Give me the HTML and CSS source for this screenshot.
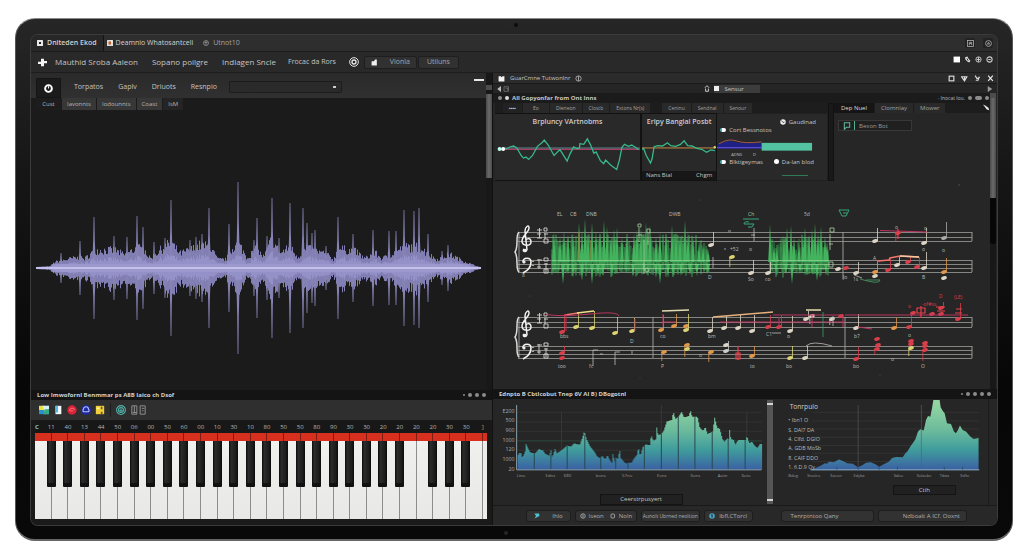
FILE: index.html
```html
<!DOCTYPE html>
<html lang="en">
<head>
<meta charset="utf-8">
<title>Score and waveform editor</title>
<link rel="stylesheet" href="styles.css">
</head>
<body>
<div class="device">
<main class="screen">
  <header class="tabbar">
    <button class="doc-tab on"><svg class="ic" viewBox="0 0 12 12"><rect width="12" height="12" rx="1" fill="#e8e8e8"/><rect x="4" y="4" width="4" height="4" fill="#222"/></svg>Dniteden Ekod</button>
    <button class="doc-tab second"><svg class="ic" viewBox="0 0 12 12"><rect width="12" height="12" rx="1" fill="#ddd"/><rect x="3" y="3" width="5" height="6" fill="#c4622d"/><path d="M7 1h4v4z" fill="#fff"/></svg>Deamnio Whatosantceli</button>
    <button class="doc-tab dim"><svg class="ic" viewBox="0 0 12 12" fill="none" stroke="#999" stroke-width="1.5"><circle cx="6" cy="6" r="5"/><path d="M3 5h6M4 8h4M6 2v4"/></svg>Utnot10</button>
    <span class="grow"></span>
    <button class="sq" aria-label="Layout"><svg class="ic" viewBox="0 0 12 12" fill="none" stroke="#aaa" stroke-width="1.4"><rect x="1" y="1" width="10" height="10"/><path d="M4 9V4h4v5M4 6h4"/></svg></button>
    <button class="sq" aria-label="Account"><svg class="ic" viewBox="0 0 12 12" fill="none" stroke="#aaa" stroke-width="1.5"><circle cx="6" cy="6" r="5"/><path d="M4 7l2-3 2 3z"/></svg></button>
  </header>

  <nav class="menubar">
    <svg class="ic logo" viewBox="0 0 12 12"><path d="M4 1h4v3h4v3H8v4H4V8H0V5h4z" fill="#f4f4f4"/></svg>
    <a href="#" class="wide">Mauthid Sroba Aaleon</a><a href="#" class="wide">Sopano poilgre</a><a href="#" class="wide">Indlagen Sncle</a><a href="#">Frocac da Rors</a>
    <svg class="ic ring" viewBox="0 0 12 12" fill="none" stroke="#e6e6e6" stroke-width="1.2"><circle cx="6" cy="6" r="5.2"/><circle cx="6" cy="6" r="2.4" stroke-width="1.6"/></svg>
    <span class="group">
      <button class="gbtn first"><svg class="ic" viewBox="0 0 12 12"><path d="M1 4h4l2-3h3v10H1z" fill="#eee"/></svg><span>Vionla</span></button>
      <button class="gbtn">Utiluns</button>
    </span>
    <span class="grow"></span>
    <span class="winicons">
      <svg class="ic" viewBox="0 0 12 12"><rect x="1" y="1" width="11" height="10" fill="#fff"/></svg>
      <svg class="ic" viewBox="0 0 12 12" fill="#ddd"><path d="M2 2l4-1 2 4 3 3-2 3-4-2-3-4z"/><path d="M5 4l2 4" stroke="#292929" stroke-width="1.6"/></svg>
      <svg class="ic" viewBox="0 0 12 12" fill="none" stroke="#ccc" stroke-width="1.6"><circle cx="6" cy="6" r="4.5"/><path d="M6 2v8M3 6h6"/></svg>
      <svg class="ic" viewBox="0 0 12 12" fill="none" stroke="#ccc" stroke-width="1.8"><circle cx="6" cy="6" r="4.5"/><path d="M4 6h4"/></svg>
    </span>
  </nav>

  <div class="main">
    <section class="left">
      <div class="wavebox">
        <div class="wavecol">
          <div class="toolbar">
            <button class="tool-on" aria-label="Record"><svg viewBox="0 0 12 12" fill="none" stroke="#fff" stroke-width="2.6"><circle cx="6" cy="6" r="4.5"/><path d="M6 3v3" stroke-width="1.4"/></svg></button>
            <a href="#">Torpatos</a><a href="#">Gaplv</a><a href="#">Driuots</a><a href="#">Resnpio</a>
            <select class="drop" aria-label="Preset"><option></option></select>
            <span class="grow"></span>
            <button class="mini" aria-label="Minimise"></button>
          </div>
          <div class="subtabs"><button class="plain">Cust</button><button>Iavonnts</button><button>Iodounnts</button><button>Coast</button><button class="dk">IsM</button></div>
          <svg id="wave" class="fluid" viewBox="31 111 455 279" role="img" aria-label="Waveform"></svg>
        </div>
        <div class="scroll lscroll"><i class="cap"></i><i class="thumb"></i></div>
      </div>
      <div class="strip"><b>Low Imwofornl Benmmar ps A8B Iaico ch Dsof</b><span class="grow"></span><i class="dot s"></i><i class="dot"></i><i class="dot"></i><i class="dot"></i></div>
      <div class="pbar">
        <button aria-label="Image"><svg viewBox="0 0 12 12"><rect y="1" width="12" height="10" fill="#2a8fd0"/><path d="M0 1h6v5H0z" fill="#e9e03e"/><path d="M4 1h8v4L7 8z" fill="#d6f0f4"/><path d="M7 5h5v6H5z" fill="#38a884"/></svg></button>
        <button aria-label="Page"><svg viewBox="0 0 12 12"><rect x="3" y="1" width="7" height="10" fill="#f2f7fa"/><path d="M3 1h3v8H3z" fill="#57b6e0"/></svg></button>
        <button aria-label="Record"><svg viewBox="0 0 12 12"><circle cx="6" cy="6" r="5.6" fill="#dc2138"/><path d="M3 7c0-4 6-4 6-1M4 7h3" stroke="#ff8b93" fill="none"/></svg></button>
        <button aria-label="Cloud"><svg viewBox="0 0 12 12"><circle cx="6" cy="6" r="6" fill="#1e2aa0"/><path d="M3 8a2 2 0 010-3 3 3 0 016 0 2 2 0 010 3z" fill="none" stroke="#b8c4ff" stroke-width="1.3"/></svg></button>
        <button aria-label="File"><svg viewBox="0 0 12 12"><path d="M1 1h10v10H1z" fill="#f1cf3a"/><path d="M7 2h2v3H7zM7 8h2v3H7z" fill="#6e5a10"/><path d="M2 3h3v2H2z" fill="#fff6b8"/></svg></button>
        <span class="rule"></span>
        <button aria-label="Sync"><svg viewBox="0 0 12 12" fill="none" stroke="#4fb3ab" stroke-width="1.3"><circle cx="6" cy="6" r="5.3"/><circle cx="6" cy="6" r="3"/><path d="M4 7h4M6 4v4"/></svg></button>
        <button class="pair" aria-label="Pages"><svg viewBox="0 0 18 12" fill="none" stroke="#8d8d8d" stroke-width="1.2"><path d="M1 1h6v10H1zM11 1h6v10h-6zM4 1v8M13 4h3M13 7h2M2 9h5"/></svg></button>
      </div>
      <div class="piano">
        <div class="nums" id="nums"></div>
        <div class="redband" id="red"></div>
        <div class="keys" id="keys"></div>
      </div>
    </section>

    <section class="right">
      <div class="rtitle">
        <svg class="ic" viewBox="0 0 12 12"><path d="M1 2h4l1 2 2-2h3v9H1z" fill="#f4f4f4"/></svg><span>GuarCmne Tutwonlnr</span><svg class="ic" viewBox="0 0 12 12" fill="none" stroke="#bbb" stroke-width="1.4"><circle cx="6" cy="6" r="4.5"/><path d="M6 2v8"/></svg>
        <span class="grow"></span>
        <svg class="ic" viewBox="0 0 12 12" fill="none" stroke="#ddd" stroke-width="2"><rect x="2" y="2" width="8" height="8"/></svg>
        <svg class="ic" viewBox="0 0 12 12" fill="none" stroke="#ddd" stroke-width="2"><path d="M1 3h9L6 10zM6 3v5"/></svg>
        <svg class="ic" viewBox="0 0 12 12" fill="none" stroke="#ddd" stroke-width="2"><path d="M2 1l3 5 5-2M9 3l-2 6H3"/></svg>
        <svg class="ic" viewBox="0 0 12 12" fill="none" stroke="#eee" stroke-width="2"><path d="M2 1l8 9M10 1L2 10"/></svg>
      </div>
      <div class="address">
        <svg viewBox="0 0 18 8"><path d="M5 0v8L0 4z" fill="#bbb"/><path d="M9 1h6v6H9zM11 3h3v3" fill="none" stroke="#777"/></svg>
        <svg class="home" viewBox="0 0 8 10" fill="none" stroke="#ccc" stroke-width="1.4"><path d="M1 4l3-3 3 3M2 5v4h4V5"/></svg>
        <button class="crumb"><i></i>Sensur</button>
        <span class="grow"></span>
        <svg viewBox="0 0 8 8" class="next"><path d="M1 0v8l6-4z" fill="#999"/></svg>
      </div>

      <div class="upper">
        <div class="ucol">
          <div class="ttl"><i class="dot"></i><i class="dot w"></i><b>All Gopyonfar from Ont Inns</b><span class="grow"></span><span class="tinytxt">· Inocat lou.</span><i class="dot"></i><i class="dot pill"></i><i class="dot"></i></div>
          <div class="panels">
            <div class="pl">
              <div class="tabs"><button class="tb dots">▪▪▪▪</button><button class="tb t1">Eo</button><button class="tb">Dieneon</button><button class="tb">Clostb</button><button class="tb">Extons Nr(s)</button><span class="sp"></span><button class="tb">Ceninu</button><button class="tb">Sendnal</button><button class="tb">Senour</button></div>
              <div class="cards">
                <article class="card c1"><h2>Brpluncy VArtnobms</h2>
                  <svg class="fluid" viewBox="15 135 444 145"><path d="M36 191H459" stroke="#a63f62" stroke-width="4"/><path d="M36 187H459" stroke="#53848d" stroke-width="3"/><polyline fill="none" stroke="#37b98a" stroke-width="4" points="40,190 50,190 60,184 72,181 82,187 95,210 102,218 110,215 118,222 130,210 145,182 158,172 166,163 178,178 196,210 214,192 236,227 245,205 256,184 266,189 274,187 275,174 287,176 298,159 308,178 318,203 325,199 338,226 348,235 354,224 370,240 388,253 396,225 404,185 412,176 424,182 434,178 444,184 455,192"/><circle cx="29" cy="190" r="6" fill="#bfe"/><circle cx="40" cy="190" r="6" fill="#fff"/></svg>
                </article>
                <article class="card c2"><h2>Eripy Bangial Posbt</h2>
                  <svg class="fluid" viewBox="457 135 228 120"><path d="M457 187H680" stroke="#c98b45" stroke-width="3"/><polyline fill="none" stroke="#37b98a" stroke-width="4" points="457,192 462,188 470,210 483,233 488,220 494,183 505,180 520,181 535,171 545,180 560,182 575,176 586,165 597,180 610,181 625,188 640,191 655,200 668,193 680,195"/><circle cx="680" cy="185" r="4" fill="#dcd66b"/></svg>
                  <div class="cfoot"><span>Nans Bial</span><span>Chgm</span></div>
                </article>
                <article class="card c3">
                  <div class="row end"><svg class="ic" viewBox="0 0 12 12"><circle cx="6" cy="6" r="5.5" fill="#eee"/><path d="M3 3l3 4 3-1" stroke="#333" stroke-width="1.6" fill="none"/></svg>Gaudinad</div>
                  <label class="row"><input type="checkbox" class="tog" checked>Cort Bessnotos</label>
                  <svg class="fluid" viewBox="0 0 110 13"><path d="M0 6q10-5 18-3t28 1v6H0z" fill="#1f2186"/><path d="M2 5q10-6 18-3t26 1" fill="none" stroke="#a8594e"/><path d="M0 9h46" stroke="#6d5ce0"/><rect x="46" y="4" width="52" height="8" fill="#52c2a0"/></svg>
                  <div class="micro"><span>ADNS</span><span>D</span></div>
                  <div class="row two"><label><input type="checkbox" class="tog" checked>Blktigeymas</label><label><input type="radio" class="rad" checked>Da-lan blod</label></div>
                  <i class="gline"></i>
                </article>
              </div>
            </div>
            <div class="splitter"></div>
            <aside class="pr">
              <div class="tabs"><button class="tb sel">Dep Nuel</button><button class="tb big">Clomnlay</button><button class="tb big">Mower</button><svg class="pen" viewBox="0 0 10 10"><path d="M1 2l3 1 4 3 1 3-3-1-3-4z" fill="#eee"/></svg></div>
              <button class="sbtn"><svg viewBox="0 0 12 12" fill="none" stroke="#5fb49a" stroke-width="1.6"><path d="M2 11V1h8v7H5z"/></svg><i></i>Bexon Bot</button>
            </aside>
          </div>
          <svg id="score" class="fluid" viewBox="493 181 497 208" role="img" aria-label="Score"></svg>
        </div>
        <div class="scroll rscroll"><i class="cap"></i><i class="thumb"></i><i class="black"></i></div>
      </div>

      <div class="strip"><b>Ednpto B Cbtlcobut Tnep 6V Al B) DBogotnl</b><span class="grow"></span><i class="dot s"></i><i class="dot"></i><i class="dot"></i><i class="dot"></i><i class="dot"></i></div>
      <div class="charts">
        <div class="ch1">
          <svg class="fluid" id="chart1" viewBox="9 60 822 240" role="img" aria-label="Spectrum"></svg>
          <button class="out o1">Ceerstrpusyert</button>
        </div>
        <div class="scroll cscroll"><i></i><i></i></div>
        <div class="ch2">
          <svg class="fluid" id="chart2" viewBox="51 60 636 240" role="img" aria-label="Tempo"></svg>
          <button class="out o2">Ctih</button>
        </div>
      </div>
      <footer class="bottom">
        <button class="b1"><svg class="ic" viewBox="0 0 12 12"><path d="M1 1h9l1 5-4 2-6 3 3-5z" fill="#4cc3cf"/></svg><span>Ihlo</span></button>
        <button class="b2"><svg class="ic" viewBox="0 0 12 12" fill="none" stroke="#aaa" stroke-width="1.8"><circle cx="6" cy="6" r="4.5"/><path d="M6 3v6"/></svg>Iseon<svg class="ic gap" viewBox="0 0 12 12" fill="none" stroke="#aaa" stroke-width="1.8"><rect x="2" y="2" width="7" height="8" rx="2"/></svg>Noln</button>
        <button class="b3">Aunolt Ubrned neoltion</button>
        <button class="b4"><svg class="ic" viewBox="0 0 12 12"><circle cx="6" cy="6" r="5.6" fill="#4aa5bd"/><path d="M6 2v8M4 4l4 3" stroke="#123" stroke-width="1.3"/></svg>Ibfl,CTorcl</button>
        <button class="b5">Tenrptntoo Qany</button>
        <button class="b6">Ndboalt A ICf. Ooxnt</button>
      </footer>
    </section>
  </div>
</main>
</div>
<script src="app.js"></script>
</body>
</html>
```
FILE: styles.css
```css
*, *::before, *::after { box-sizing: border-box; }
body { margin: 0; padding: 18px 11px 18px 15px; background: #fff; font-family: "Open Sans", "Noto Sans", sans-serif; font-size: 7px; line-height: 8px; color: #c4c4c4; }
button { font: inherit; color: inherit; background: none; border: 0; padding: 0; margin: 0; white-space: nowrap; display: flex; align-items: center; }
a { color: inherit; text-decoration: none; white-space: nowrap; }
h2 { margin: 0; }
svg { display: block; flex: none; }
i { display: block; }
.fluid { width: 100%; height: auto; }
.ic { width: 7px; height: 7px; }
.grow { flex: 1; }
.device { position: relative; padding: 16px 15px 14px; border: 1px solid #555; border-top-color: #8a8a8a; border-bottom: 2px solid #666; border-radius: 20px; background: linear-gradient(#262626, #161616 30%, #070707 70%, #090909); }
.device::before, .device::after { content: ""; position: absolute; left: 50%; top: 4px; width: 4px; height: 4px; border-radius: 50%; background: #0c0c0c; }
.device::after { left: 49%; top: auto; bottom: 4px; background: #262626; }
.screen { border-radius: 7px; overflow: hidden; background: #222; box-shadow: 0 0 0 1px #3b3b3b; }

.tabbar { display: flex; align-items: center; height: 17px; background: #2e2e2e; border-bottom: 1px solid #1b1b1b; padding-right: 4px; }
.doc-tab { height: 16px; gap: 4px; padding: 0 6px; color: #d2d2d2; }
.doc-tab.on { background: #272727; border-right: 1px solid #141414; padding-right: 6px; font-weight: 600; }
.doc-tab.second { padding-left: 3px; gap: 3px; }
.doc-tab.dim { color: #a4a4a4; padding-left: 4px; }
.doc-tab .ic { width: 6px; height: 6px; }
.sq { width: 10px; height: 10px; margin-left: 8px; justify-content: center; background: #222; border-radius: 2px; }

.menubar { display: flex; align-items: center; height: 21px; background: #292929; border-bottom: 1px solid #1d1d1d; font-size: 8px; padding: 0 4px 0 7px; }
.menubar a { margin-right: 12px; font-size: 7px; }
.menubar a.wide { margin-right: 14px; font-size: 8px; }
.menubar a:nth-of-type(4) { margin-left: -2px; margin-right: 13px; }
.menubar .logo { width: 9px; height: 9px; margin-right: 8px; }
.menubar .ring { width: 10px; height: 10px; margin-right: 5px; }
.group { display: flex; gap: 1px; }
.gbtn { height: 13px; width: 41px; justify-content: center; background: #313131; border: 1px solid #1e1e1e; border-radius: 2px; font-size: 7px; color: #a5a5a5; }
.gbtn.first { width: 53px; gap: 12px; }
.winicons { display: flex; gap: 4px; align-self: flex-start; padding-top: 4px; }

.main { display: grid; grid-template-columns: 462fr 504fr; }
.left, .right, .wavecol, .ucol { min-width: 0; }
.left { border-right: 1px solid #121212; }
.wavebox { display: flex; background: #1b1b1b; }
.wavecol { flex: 1; }
.toolbar { display: flex; align-items: center; height: 25px; background: linear-gradient(#2a2a2a, #303030); padding: 2px 2px 0 0; }
.toolbar a { margin-right: 15px; font-size: 7px; }
.tool-on { width: 25px; height: 20px; margin: 3px 13px 0 5px; background: #1b1b1b; border: 1px solid #151515; justify-content: center; }
.tool-on svg { width: 9px; height: 9px; }
.drop { appearance: none; width: 113px; height: 12px; margin-left: -3px; background: #2a2a2a linear-gradient(#ccc, #ccc) no-repeat right 5px center / 3px 2px; border: 1px solid #1c1c1c; border-radius: 2px; padding: 0; }
.mini { width: 10px; height: 2px; background: #e8e8e8; margin-bottom: 13px; }
.subtabs { display: flex; height: 13px; padding: 0 0 1px 5px; gap: 1px; font-size: 6px; }
.subtabs button { padding: 0 5px; background: #373737; color: #b5b5b5; }
.subtabs .plain { background: #1d1d1d; width: 25px; justify-content: center; padding: 0; }
.subtabs .dk { background: #242424; }
.scroll { width: 6px; margin-right: 1px; background: #181818; }
.cap { height: 5px; background: #4c4c4c; }
.thumb { background: linear-gradient(90deg, #4a4a4a, #6a6a6a, #4a4a4a); }
.lscroll { padding-top: 12px; margin-right: 0; }
.lscroll .thumb { height: 84px; margin-top: 4px; }
.rscroll .thumb { height: 100px; }
.rscroll .black { height: 46px; background: #070707; border-radius: 0 0 3px 3px; }

.strip { display: flex; align-items: center; gap: 3px; height: 10px; padding: 0 6px; background: #141414; font-size: 6px; color: #cfcfcf; }
.dot { width: 4px; height: 4px; border-radius: 50%; background: #8b8b8b; }
.dot.s { width: 2px; height: 2px; }
.dot.w { background: #ddd; }
.dot.pill { width: 7px; border-radius: 2px; }
.pbar { display: flex; align-items: center; height: 20px; padding-left: 8px; gap: 4px; background: #2f2f2f; }
.pbar button svg { width: 10px; height: 10px; }
.pbar .pair svg { width: 17px; height: 10px; }
.rule { width: 1px; height: 14px; background: #1c1c1c; margin: 0 1px; }
.piano { padding: 0 5px 6px 4px; background: #1a1a1a; }
.nums { display: flex; height: 13px; align-items: center; margin-right: -4px; font-size: 6px; background: #181818; }
.nums span { flex: 1; text-align: center; color: #b5b5b5; }
.nums .lead { flex: none; width: 8px; color: #7fc6d8; text-align: left; font-weight: 700; }
.nums .last { color: #e98a4f; }
.redband, .keys { display: flex; }
.redband { height: 8px; background: #d8301f; }
.redband span { flex: 1; border-right: 1px solid #7c1c12; }
.redband .bit, .keys .bit { flex: none; width: 4px; border: 0; }
.keys { height: 78px; background: #ececea; }
.key { position: relative; flex: 1; min-width: 0; background: linear-gradient(#f0f0ee, #e8e8e6); border-right: 1px solid #8d8d8d; }
.key.sharp::after { content: ""; position: absolute; z-index: 1; top: 0; right: -5px; width: 9px; height: 46px; background: linear-gradient(90deg, #0b0b0b, #2c2c2c 25%, #1c1c1c 75%, #0b0b0b); border-bottom: 4px solid #111; border-radius: 0 0 1px 1px; }

.rtitle { display: flex; align-items: center; gap: 5px; height: 11px; padding: 0 3px 0 5px; background: #2b2b2b; border-bottom: 1px solid #1a1a1a; font-size: 6px; }
.rtitle .grow ~ .ic { margin-left: 1px; }
.address { display: flex; align-items: center; height: 9px; padding: 0 4px; background: #252525; font-size: 6px; }
.address svg { width: 14px; height: 6px; }
.address .home { width: 6px; height: 7px; margin-left: 39%; }
.address .next { width: 6px; height: 6px; }
.crumb { width: 46px; height: 8px; margin-left: 4px; gap: 5px; background: #3c3c3c; }
.crumb i { width: 5px; height: 5px; background: #eee; }
.upper { display: flex; background: #262626; }
.ucol { flex: 1; }
.ttl { display: flex; align-items: center; gap: 3px; height: 10px; padding: 0 1px 0 5px; background: #1b1b1b; font-size: 6px; }
.tinytxt { font-size: 5px; color: #bbb; }
.panels { display: flex; height: 78px; padding-left: 2px; }
.pl { flex: 333; min-width: 0; }
.pr { flex: 156; min-width: 0; }
.splitter { width: 6px; background: #191919; border: 1px solid #111; }
.tabs { display: flex; height: 10px; gap: 1px; background: #1d1d1d; font-size: 5px; }
.pl .tabs { padding-left: 8px; }
.tb { padding: 0 6px; background: #292929; color: #a2a2a2; }
.tb.dots { color: #ccc; background: #222; }
.tb.t1 { padding: 0 10px; }
.sp { width: 10px; }
.tb.sel { width: 40px; justify-content: center; padding: 0; background: #151515; color: #ddd; font-size: 6px; }
.tb.big { font-size: 6px; }
.pen { width: 8px; height: 8px; margin-left: auto; }
.cards { display: flex; height: 68px; }
.card { position: relative; height: 68px; min-width: 0; border: 1px solid #121212; border-left: 0; background: #292929; overflow: hidden; }
.card h2 { height: 17px; padding-top: 3px; text-align: center; font-size: 7px; line-height: 10px; font-weight: 600; color: #cdcdcd; white-space: nowrap; }
.c1 { flex: 148; }
.c2 { flex: 76; border-left: 1px solid #111; }
.c3 { flex: 109; border-color: #202020; font-size: 6px; display: flex; flex-direction: column; padding: 4px 0 0 3px; }
.cfoot { position: absolute; left: 0; right: 0; bottom: 0; height: 9px; display: flex; justify-content: space-between; padding: 0 4px; background: #171717; font-size: 6px; }
.row { display: flex; align-items: center; gap: 3px; height: 8px; white-space: nowrap; }
.row.end { justify-content: flex-end; padding-right: 11px; }
.row .ic { width: 6px; height: 6px; }
.c3 .fluid { margin: 5px 0 0 -3px; }
.two { justify-content: space-between; padding-right: 13px; }
.two label { display: flex; align-items: center; gap: 3px; }
.tog, .rad { appearance: none; margin: 0; width: 6px; height: 4px; border-radius: 2px; background: linear-gradient(90deg, #3ab3bd 40%, #fff 40%); }
.rad { width: 5px; height: 5px; border-radius: 50%; background: #fff; }
.micro { display: flex; gap: 11px; padding-left: 11px; font-size: 4px; line-height: 6px; }
.gline { width: 26px; height: 1px; margin: 9px 0 0 62px; background: #2d7a55; }
.sbtn { width: 74px; height: 11px; margin: 7px 0 0 4px; gap: 3px; padding-left: 4px; background: #202020; border: 1px solid #383838; font-size: 6px; color: #999; }
.sbtn svg { width: 8px; height: 8px; }
.sbtn i { width: 1px; height: 9px; background: #4fb08f; margin-right: 1px; }

.charts { display: flex; height: 107px; background: #262626; border-bottom: 1px solid #191919; }
.ch1 { flex: 274; padding-top: 1px; min-width: 0; }
.ch2 { flex: 212; padding: 1px 0 0; margin-right: 8px; border-right: 1px solid #1c1c1c; min-width: 0; }
.cscroll { display: flex; flex-direction: column; justify-content: space-between; width: 6px; margin: 1px 3px 1px 1px; padding: 3px 0; background: #555; }
.cscroll i { height: 2px; background: #d4d4d4; }
.out { justify-content: center; height: 11px; border: 1px solid #141414; background: #212121; font-size: 6px; }
.o1 { width: 83px; margin: 14px auto 0 39%; }
.o2 { width: 63px; height: 10px; margin: 5px 0 0 55%; }
.bottom { display: flex; align-items: center; height: 19px; padding: 0 30px 0 33px; gap: 4px; background: #282828; font-size: 6px; color: #b0b0b0; }
.bottom button { height: 12px; justify-content: center; gap: 4px; background: #323232; border: 1px solid #1d1d1d; border-radius: 3px; overflow: hidden; }
.bottom .ic { width: 6px; height: 6px; }
.b1 { flex: 46; } .b2 { flex: 64; } .b3 { flex: 61; } .b4 { flex: 50; } .b5 { flex: 88; } .b6 { flex: 87; }
.bottom .b1 { gap: 12px; }
.bottom .b2 { gap: 3px; }
.bottom .b2 .gap { margin-left: 3px; }
.bottom .b3 { font-size: 5px; }
.bottom .b5 { margin-left: 24px; justify-content: flex-start; padding-left: 9px; }
.bottom .b6 { justify-content: flex-end; padding-right: 6px; }
svg text { font-family: "Open Sans", "Noto Sans", sans-serif; }
```
FILE: app.js
```js
let seed = 7;
const rnd = () => (seed = (seed * 16807) % 2147483647) / 2147483647;
const lerp = (pts, x) => {
  for (let i = 1; i < pts.length; i++) {
    if (x <= pts[i][0]) {
      const [x0, y0] = pts[i - 1], [x1, y1] = pts[i];
      return y0 + (y1 - y0) * (x - x0) / (x1 - x0 || 1);
    }
  }
  return pts[pts.length - 1][1];
};
const pairs = s => s.trim().split(/\s+/).map(p => p.split(',').map(Number));
const byId = id => document.getElementById(id);

/* Audio waveform */
(() => {
  const env = pairs('36,0 50,1 55,6 75,11 85,10 95,20 115,20 125,14 137,23 145,20 150,10 160,20 171,29 180,16 190,20 200,26 210,24 218,9 226,9 235,27 241,24 247,11 256,21 264,12 272,34 280,16 290,24 298,12 307,22 325,16 334,9 338,22 355,19 365,10 375,17 382,10 390,14 405,24 419,24 430,14 437,9 450,15 460,9 470,4 480,0');
  const peaks = pairs('61,15 80,27 94,51 114,32 127,31 137,52 143,41 154,26 165,30 171,68 190,28 196,31 202,34 209,60 229,44 238,86 254,28 257,50 267,32 272,70 279,30 290,65 303,60 307,45 312,35 315,38 326,22 338,51 353,34 373,38 389,37 396,37 404,58 414,57 419,60 428,34 442,17 448,23');
  const cy = 268;
  let solid = '', body = '', out = '';
  for (let x = 37.5; x < 481; x += 1) {
    const h = lerp(env, x) * (0.6 + 0.45 * rnd()) + 1;
    body += `M${x} ${cy - h}V${cy + h * (0.9 + 0.2 * rnd())}`;
    solid += `M${x} ${cy - h * 0.5}V${cy + h * 0.5}`;
  }
  for (const [x, h] of peaks) {
    out += `<path d="M${x - 2} ${cy}L${x - 0.8} ${cy - h * 0.55}L${x - 0.4} ${cy - h}H${x + 0.4}L${x + 0.8} ${cy - h * 0.55}L${x + 2} ${cy}L${x + 0.8} ${cy + h * 0.55}L${x + 0.4} ${cy + h}H${x - 0.4}L${x - 0.8} ${cy + h * 0.55}Z" fill="#8683b4"/>`;
  }
  byId('wave').innerHTML = `<path d="${body}" stroke="#807eb3" stroke-width="1"/>${out}<path d="${solid}" stroke="#9490c8" stroke-width="1"/><path d="M52 ${cy - 2.5}H470M52 ${cy + 2.5}H470" stroke="#a39fd4" stroke-width="3" opacity=".6"/><path d="M36 ${cy}H481" stroke="#c4c0ea" stroke-width="2"/>`;
})();

/* Piano */
(() => {
  const n = '11 40 13 44 50 06 00 50 60 00 10 30 10 80 50 50 80 90 30 30 20 20 20 20 30 30 ]'.split(' ');
  byId('nums').innerHTML = '<span class="lead">C</span>' + n.map((t, i) => `<span${i === 26 ? ' class="last"' : ''}>${t}</span>`).join('');
  let r = '', k = '';
  for (let i = 1; i <= 27; i++) {
    r += '<span></span>';
    k += `<button class="key${i === 23 || i === 27 ? '' : ' sharp'}" aria-label="Key ${i}"></button>`;
  }
  byId('red').innerHTML = r + '<span class="bit"></span>';
  byId('keys').innerHTML = k + '<span class="bit"></span>';
})();

/* Spectrum and tempo charts */
(() => {
  const grad = id => `<defs><linearGradient id="${id}" gradientUnits="userSpaceOnUse" x1="0" y1="70" x2="0" y2="270"><stop offset="0" stop-color="#93d6a2"/><stop offset=".4" stop-color="#6dbb9c"/><stop offset=".7" stop-color="#3f9c9c"/><stop offset="1" stop-color="#3b60a4"/></linearGradient></defs>`;
  const lab = (x, y, t, c = '#999', s = 15) => `<text x="${x}" y="${y}" font-size="${s}" fill="${c}">${t}</text>`;
  const p1 = '82,230 84,220 92,220 94,232 98,228 104,215 107,192 114,208 120,218 135,220 145,207 158,212 165,222 178,228 181,200 184,232 188,225 194,207 200,220 215,210 230,197 242,200 252,190 268,195 274,180 282,155 290,180 300,200 312,215 320,228 328,235 336,228 345,238 352,226 360,243 366,250 368,222 374,245 378,232 384,238 388,205 392,235 405,250 425,248 432,235 440,225 445,203 450,228 458,202 466,194 480,195 483,165 490,183 497,178 500,143 504,165 512,163 520,155 530,125 545,120 550,95 556,118 565,110 575,96 582,112 597,108 601,90 606,110 622,110 630,145 640,152 646,140 652,162 668,155 674,113 682,145 688,143 698,178 704,185 712,175 716,178 719,150 723,178 732,180 736,195 745,180 758,180 768,180 771,168 778,190 786,185 796,200 804,203 810,192 815,192';
  const pts = pairs(p1);
  let s = grad('g1'), step = '';
  for (const y of [97, 126, 154, 183, 211, 240]) s += `<path d="M80 ${y}H818" stroke="${y === 183 ? '#2c5a49' : '#3a3a3a'}" stroke-width="2"/>`;
  s += '<path d="M215 97V270M515 75V270M772 97V270" stroke="#414141" stroke-width="2"/>';
  for (let x = 83; x < 816; x += 3) step += `L${x} ${lerp(pts, x).toFixed(0)}h3`;
  s += `<path d="M83 270${step}V270Z" fill="url(#g1)"/>`;
  for (const x of [133, 183, 232, 285, 333, 378, 415, 464, 515, 566, 616, 668, 716, 767]) s += `<path d="M${x} ${lerp(pts, x)}V270" stroke="#27484f" stroke-width="3"/>`;
  s += '<path d="M80 75V270H816" fill="none" stroke="#8aa0ad" stroke-width="3"/>';
  ['E200', '500', '900', '1000', '120', '1000', '20'].forEach((t, i) => { s += `<text x="74" y="${98 + i * 29}" font-size="16" text-anchor="end" fill="#aaa">${t}</text>`; });
  [[80, 'Lino'], [167, 'Edns'], [222, '680'], [318, 'bons'], [397, '57no'], [502, 'Eons'], [603, 'Sons'], [685, 'Aotn'], [756, 'Soto']].forEach(([x, t]) => { s += lab(x, 292, t, '#999', 13); });
  byId('chart1').innerHTML = s;

  s = grad('g2');
  for (const y of [97, 123, 147, 172, 197, 220, 245]) s += `<path d="M160 ${y}H662" stroke="#3a3a3a" stroke-width="2"/>`;
  s += '<path d="M298 75V270" stroke="#585858" stroke-width="2"/><polygon fill="url(#g2)" points="150,270 165,267 185,258 198,250 204,252 210,246 225,247 240,239 250,243 265,250 282,252 297,262 310,256 322,249 336,247 350,253 361,261 375,253 390,246 400,234 412,231 432,232 440,220 446,215 455,200 462,190 470,178 478,155 485,148 495,152 502,120 508,108 515,110 520,85 524,60 543,60 546,82 552,92 558,100 565,130 577,132 586,155 592,160 598,150 604,137 612,150 622,155 635,170 645,177 660,174 660,270"/><path d="M488 75V270" stroke="#4c6a60" stroke-width="2"/><path d="M155 270H662" stroke="#8fb6c8" stroke-width="3"/><path d="M234 260v10M298 260v10M361 260v10M416 260v10M557 260v10M612 260v10" stroke="#2b4a63" stroke-width="2"/>';
  s += lab(92, 87, 'Tonrpulo', '#d0d0d0', 20);
  ['• Ibn1  O', 'S. DAl7  DA', '4. Clfd. DGlO', 'A. GDB  MoSb', '8. CAlF  DDO', '1. 6.D.9 Oy'].forEach((t, i) => { s += lab(88, 127 + i * 28, t, '#bbb', 16); });
  [[88, 'Bdog'], [145, 'Snoiiro'], [214, 'Sucon'], [284, 'Edybx'], [405, 'Sdoo'], [474, 'Solxobv'], [543, 'Tdws'], [605, 'Ssfto']].forEach(([x, t]) => { s += lab(x, 292, t, '#999', 12); });
  byId('chart2').innerHTML = s;
})();

/* Score */
(() => {
  const W = '#dcd5c5', Y = '#dcd473', O = '#e0984a', R = '#d93f4a', G = '#43b45d';
  let s = '';
  for (const y of [232, 237, 241, 260, 264, 268, 272, 317, 322, 327, 346, 350, 354, 358]) s += `<path d="M518 ${y}.5H972" stroke="#90908c" stroke-width=".9"/>`;
  s += '<path d="M519 232v40M519 317v41M972 232v9M972 260v12M972 317v10M972 346v12M843 232v47M653 317v41M845 317v41" stroke="#a5a5a0" stroke-width=".9"/>';
  const clef = (y, b) => `<path d="M519 ${y}c-4 3 0 14-4 20c4 6 0 17 4 20" fill="none" stroke="#ddd" stroke-width="1.5"/><path d="M527 ${y + 18}c-2 3-5 1-3-1M527 ${y + 18}L525 ${y - 1}c0-4 4-7 4-3s-7 8-7 13s9 6 9 1s-6-4-5 0" fill="none" stroke="#f2f2f2" stroke-width="1.5"/><circle cx="525" cy="${y + 18}" r="1.3" fill="#eee"/><path d="M523 ${b + 2}c0-5 8-5 8 0s-4 9-8 11" fill="none" stroke="#f2f2f2" stroke-width="1.6"/><circle cx="524" cy="${b + 2}" r="1.6" fill="#eee"/><path d="M533 ${b + 1}v1M533 ${b + 5}v1" stroke="#eee" stroke-width="1.3"/>`;
  s += clef(232, 260) + clef(317, 346);
  for (const y of [230, 315]) {
    s += `<path d="M537 ${y}h5M539.5 ${y - 2}v10M537 ${y + 4}h4M537 ${y + 8}h5M544 ${y - 2}h3v3h-3zM544 ${y + 4}h4M545 ${y + 3}v6M544 ${y + 9}h4v4h-4zM537 ${y + 30}h5M539 ${y + 29}v10M537 ${y + 37}h4M544 ${y + 28}h4v3h-4zM544 ${y + 34}h4M546 ${y + 33}v9M544 ${y + 39}h4v4h-4z" fill="none" stroke="#d4d4cf" stroke-width=".9"/>`;
  }

  /* Dense strokes fill the band; tall narrow spikes rise and fall outside it. */
  const band = (x0, x1, tops, bots) => {
    let d = '', e = '', spikes = '';
    for (let x = x0; x < x1; x += 1) {
      const a = Math.max(234 + rnd() * 16, 232 + (x > x1 - 14 ? (x - x1 + 14) * 1.4 : 0)), c = 267 + rnd() * 7;
      e += `M${x} ${(a + 5).toFixed(1)}V${c.toFixed(1)}`;
      if (rnd() > 0.45) d += `M${x} ${a.toFixed(1)}V${(c + rnd() * 4).toFixed(1)}`;
    }
    for (const [x, y] of tops) spikes += `M${x - 1.8} 262L${x} ${y}L${x + 1.8} 262Z`;
    for (const [x, y] of bots) spikes += `M${x - 1.8} 264L${x} ${y}L${x + 1.8} 264Z`;
    s += `<path d="${e}" stroke="#2b7a3f" stroke-width="1"/><path d="${d}" stroke="${G}" stroke-width=".8"/><path d="${spikes}" fill="${G}"/>`;
  };
  band(552, 710, pairs('554,232 560,236 564,231 568,234 573,233 579,222 582,230 585,218 588,232 592,222 596,231 600,232 604,220 607,226 611,238 614,229 617,227 622,237 627,236 634,233 637,229 641,228 646,222 650,225 656,236 660,232 666,234 672,225 676,231 680,234 685,220 688,232 693,237 699,242 703,246 708,249'), pairs('563,284 568,274 573,278 582,281 592,284 598,276 603,276 612,275 633,277 644,274 656,278 660,284 668,278 673,277 681,276 690,275 697,276 708,274'));
  band(770, 829, pairs('770,224 774,246 777,250 784,243 787,227 791,225 794,237 799,243 803,236 805,227 809,234 812,229 815,223 818,232 821,226 825,236 827,242'), pairs('776,272 786,274 792,284 800,274 807,275 812,273 817,281 826,272'));
  s += `<path d="M552 260.500H710M552 264.500H710M552 268.500H710M770 260.500H829M770 264.500H829M770 268.500H829" stroke="#a9d9a4" stroke-width=".6"/><path d="M579 232v28M591 240v20" stroke="#9a7a3a" stroke-width="1"/>`;
  s += '<path d="M638 224h3v3h-3zM639 228v14M638 235h4M647 229h3v4h-3zM648 234v11M645 270a2 2 0 114 0a2 2 0 11-4 0M644 240v34M830 228h4v4h-4zM830 234v16M829 244h4M829 262h4v5h-4z" fill="none" stroke="#a9d0a0" stroke-width=".8"/>';

  const note = ([x, y, c, sy]) => {
    s += `<ellipse cx="${x}" cy="${y}" rx="2.900" ry="1.800" transform="rotate(-15 ${x} ${y})" fill="${c}"/>`;
    if (sy) s += `<path d="M${x + (sy < y ? 2.500 : -2.200)} ${y}V${sy}" stroke="${c}" stroke-width=".8"/>`;
  };
  [[711, 245, W, 232], [732, 257, Y, 267], [751, 273, W, 260], [768, 273, W, 262], [875, 241, W, 228], [898, 233, R, 241], [924, 243, W, 228], [944, 238, '#aaa', 222],
   [838, 269, W], [846, 268, R], [856, 273, W, 262], [875, 272, O, 261], [875, 276, W], [888, 270, R, 259], [897, 265, W, 257], [908, 262, R, 257], [917, 267, R, 257], [924, 268, W, 252], [944, 272, O, 258], [944, 278, W],
   [562, 332, R, 314], [576, 327, Y, 313], [592, 328, Y, 311], [615, 333, Y, 317], [632, 331, Y, 318], [661, 330, O, 315], [674, 326, O, 314], [686, 326, O], [686, 330, Y, 314],
   [710, 331, W, 317], [724, 328, W, 316], [738, 328, W, 315], [752, 331, W, 315], [768, 327, R, 315], [779, 327, R, 315], [790, 331, W, 316], [806, 319, W, 311], [812, 316, W, 324], [832, 319, W, 325], [841, 316, R], [856, 328, W, 314], [894, 328, O, 318], [909, 327, R, 313], [913, 313, R],
   [932, 314, R], [941, 308, R, 302], [941, 314, R], [958, 319, R, 303],
   [562, 353, R, 346], [562, 358, R], [664, 352, O, 361], [687, 345, O, 357], [687, 349, Y], [711, 352, O, 362], [726, 345, W], [726, 351, '#ccc', 341], [752, 356, O, 346], [790, 358, Y, 346], [805, 358, W, 346], [856, 359, R, 347],
   [877, 339, R], [878, 345, R], [877, 349, R, 355], [911, 341, R], [911, 344, R], [911, 348, Y, 356], [925, 343, R], [925, 346, R], [925, 350, R, 361]].forEach(note);
  s += '<g fill="none" stroke-width="1.500"><path d="M565 315L578 313" stroke="#f07b6a"/><path d="M577 313L594 311" stroke="#f0e08a"/><path d="M662 311L689 310M806 310h15" stroke="#e3dbb0"/><path d="M713 317L773 312" stroke="#e8b07a"/><path d="M878 261L889 260L890 258L900 256L919 257" stroke="#f0766c"/><path d="M900 256L919 257" stroke="#f5c9a0"/></g>';
  s += '<g fill="none" stroke="#b9355f" stroke-width="1"><path d="M546 314.500Q562 317 590 314T619 316M880 230.500L927 232M773 315H842M845 315H968M635 319v12M566 314v17M664 322h12M663 314v12M779 317V327M812 315v12M843 317v10M858 327l14 2M720 322H845"/></g>';
  s += '<g fill="none" stroke="#e8404c" stroke-width="1.200"><path d="M917 308h8v5h-8zM936 307h9M937 311h8M956 309h6M955 313h7M921 306v12M898 229v10M738 346v14M736 353h4v6h-4z"/></g>';
  s += '<g fill="none" stroke="#bbb" stroke-width=".8"><path d="M593 350v16M593 350h5M615 352v13M615 352h5M600 354h3M632 351v3M806 346Q812 340 832 346M713 257v11M754 228v13M751 235h4M724 249h2M728 231h3M833 316v10M772 333h9M862 278l-8-3"/><path d="M823 312v25" stroke="#37a070"/><path d="M860 279Q880 285 880 280L866 280" stroke="#4c9e68"/><path d="M743 219h16M749 222q-5-1-5 2h10l-2 3h-4M839 210h10l-3 6h-4zM843 213h4" stroke="#37a878" stroke-width="1"/></g>';
  const t = (x, y, v, c = '#bdbdb8') => { s += `<text x="${x}" y="${y}" font-size="5" fill="${c}">${v}</text>`; };
  [[557, 216, 'EL'], [570, 216, 'CB'], [586, 216, 'DNB'], [669, 216, 'DWB'], [748, 216, 'Ch', '#8fd0b8'], [804, 216, '5d'], [749, 251, 'o'], [730, 251, '+52'], [895, 229, 'o'], [924, 230, 'o'], [922, 251, 'o'], [942, 252, 'o'], [873, 260, 'A'], [522, 277, '8'], [708, 279, 'D'], [748, 281, 'So'], [765, 281, 'co'], [843, 279, 'Jo'], [853, 281, '1s'], [922, 279, 'B'],
   [560, 338, 'bbs'], [630, 343, 'D'], [660, 338, 'co'], [708, 338, 'bm'], [766, 336, 'C1'], [787, 338, 'o'], [854, 338, 'b7'], [908, 337, 'o'], [558, 368, 'too'], [589, 368, 'fc'], [661, 368, 'P'], [699, 357, 'o'], [750, 368, 'to'], [786, 368, 'bo'], [853, 368, 'bo'], [891, 361, 'o'], [921, 368, 'O']].forEach(a => t(...a));
  [[908, 308, 'o'], [922, 306, '-of#ss'], [939, 298, 'D'], [954, 299, '(LE)']].forEach(([x, y, v]) => t(x, y, v, R));
  s += '<g fill="#555"><circle cx="959" cy="185" r=".8"/><circle cx="530" cy="296" r=".5"/><circle cx="700" cy="200" r=".5"/><circle cx="880" cy="375" r=".5"/><circle cx="640" cy="378" r=".5"/></g>';
  byId('score').innerHTML = s;
})();
```
